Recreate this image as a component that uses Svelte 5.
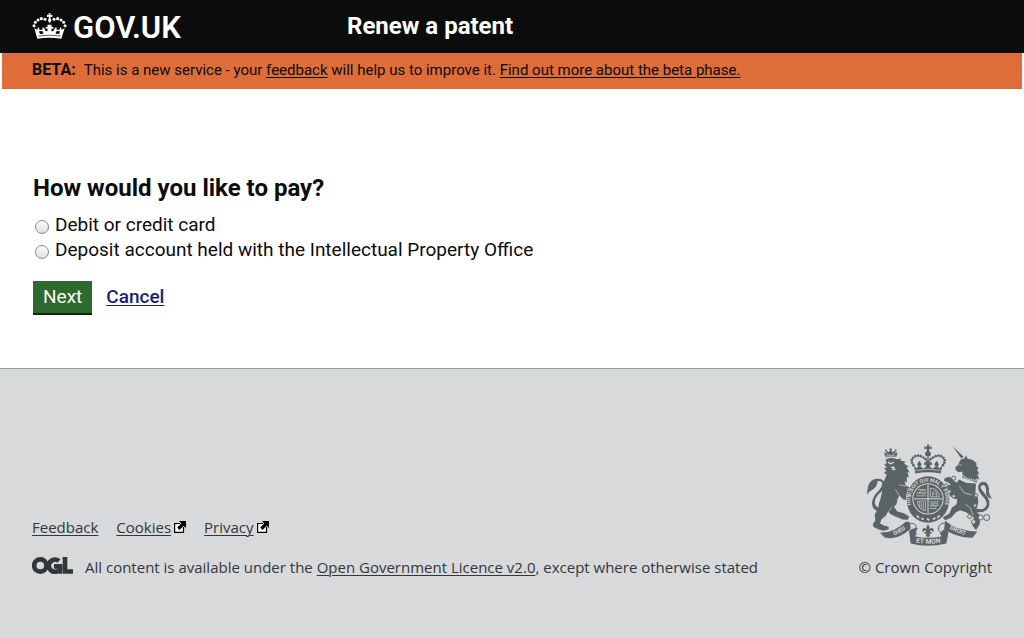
<script>
  let payment = $state('');

  const crownBalls = [
    [102, 76, 4.5], [106, 66, 4.5], [114, 59, 4.5], [124, 55, 4.8], [135, 57, 4.5],
    [162, 57, 4.5], [173, 55, 4.8], [183, 59, 4.5], [191, 66, 4.5], [195, 76, 4.5]
  ];
  const pearls = [
    [160, 87], [156, 80], [155, 72], [159, 65], [166, 60], [174, 58], [182, 60], [190, 64], [197, 69],
    [249, 87], [253, 80], [254, 72], [250, 65], [243, 60], [235, 58], [227, 60], [219, 64], [212, 69]
  ];
</script>

<header class="masthead">
  <a class="logo" href="#home">
    <svg class="crown" viewBox="96 38 105 78" aria-hidden="true">
      <g fill="#fff">
        {#each crownBalls as [x, y, r]}
          <circle cx={x} cy={y} {r} />
        {/each}
        <path d="M145 39h7l-1 5 6-1v7l-6-1 1 6q4 5 0 10l-3 3-3-3q-4-5 0-10l1-6-6 1v-7l6 1z" />
        <path d="M103 84L112 88 114 80Q119 83 118 88L124 88 123 93Q119 91 117 94L120 101 130 100 129 93Q123 94 123 90L128 87 127 81Q132 81 134 86L137 93 143 92 142 84 137 86V79L143 80 142 73H155L154 80 160 79V86L155 84 154 92 160 93 163 86Q165 81 170 81L169 87 174 90Q174 94 168 93L167 100 177 101 180 94Q178 91 174 93L173 88 179 88Q178 83 183 80L185 88 194 84 184 115Q148 110 112 115z" />
      </g>
      <path d="M115 107Q148 102 182 107" fill="none" stroke="#0b0c0c" stroke-width="2" />
    </svg>
    <span>GOV.UK</span>
  </a>
  <a class="service" href="#start">Renew a patent</a>
</header>

<div class="beta">
  <strong>BETA:</strong>
  <span>This is a new service - your <a href="#feedback">feedback</a> will help us to improve it. <a href="#beta">Find out more about the beta phase.</a></span>
</div>

<main>
  <form onsubmit={(e) => e.preventDefault()}>
    <fieldset>
      <legend>How would you like to pay?</legend>
      <label><input type="radio" name="payment" value="card" bind:group={payment} />Debit or credit card</label>
      <label><input type="radio" name="payment" value="deposit" bind:group={payment} />Deposit account held with the Intellectual Property Office</label>
    </fieldset>
    <div class="actions">
      <button type="submit">Next</button>
      <a href="#cancel">Cancel</a>
    </div>
  </form>
</main>

{#snippet external()}
  <svg class="external" viewBox="0 0 12 12" aria-hidden="true">
    <path d="M6 2.500H.6v8.900h8.900V6" fill="#fff" stroke="#000" stroke-width="1.200" />
    <path d="M5 0h7v7L9.700 4.800 5.500 9 3.200 6.600 7.300 2.400z" />
  </svg>
{/snippet}

<footer>
  <div class="meta">
    <nav aria-label="Support links">
      <span><a href="#feedback">Feedback</a></span>
      <span><a href="#cookies">Cookies</a>{@render external()}</span>
      <span><a href="#privacy">Privacy</a>{@render external()}</span>
    </nav>
    <div class="licence">
      <svg class="ogl" viewBox="0 0 123 51" role="img" aria-label="OGL">
        <g fill="none" stroke="#323739" stroke-width="14">
          <circle cx="25" cy="25.500" r="18.500" />
          <path d="M81 12A18.500 18.500 0 1 0 84 37V28H66" />
          <path d="M99 0V43.500H123" />
        </g>
        <path d="M78 23h13v27H81z" fill="#323739" />
      </svg>
      <p>All content is available under the <a href="#licence">Open Government Licence v2.0</a>, except where otherwise stated</p>
    </div>
  </div>
  <a class="copyright" href="#copyright">
    <svg class="crest" viewBox="21 24 375 308" aria-hidden="true">
      <defs>
        <path id="garter" d="M164 224A53 53 0 1 1 244 224" />
        <path id="ribbon" d="M152 317Q204 328 258 317" />
        <path id="left" d="M86 304Q122 294 152 266" />
        <path id="right" d="M256 268Q284 291 330 301" />
      </defs>
      <g fill="#5a6466">
        <!-- lion -->
        <path d="M76 64L72 48 78 51 80 44 86 48 92 41 98 48 104 44 107 51 113 48 109 64Q92 58 76 64z" />
        <circle cx="92" cy="40" r="3.500" />
        <circle cx="78" cy="43" r="3" />
        <circle cx="107" cy="43" r="3" />
        <path d="M77 70Q94 62 110 69L124 67 121 73 137 77 132 82 146 92 140 94 149 109 142 108 147 124 140 122 141 138 134 136 137 148Q152 153 156 166L158 186 148 192 130 190 118 178 112 190Q112 204 102 212L112 226 132 231 148 242 143 251 128 250 106 241 92 234 84 226 78 238 64 250 60 262 72 268 86 272 86 280 70 284 54 279 40 272 39 262 46 254 44 236 54 218Q56 200 61 190L66 168Q62 146 74 130L80 116 72 110 79 104 72 96 80 94 73 84 80 82z" />
        <path d="M60 226Q36 224 36 198Q40 178 56 164Q68 152 66 140Q62 132 52 136Q52 152 38 160Q28 164 21 176Q22 160 24 152Q30 130 50 128Q70 126 73 142Q73 156 62 168Q46 180 44 198Q46 214 60 214z" />
        <!-- unicorn -->
        <path d="M278 30L311 62 304 67z" />
        <path d="M302 70L314 66 318 58 323 68Q342 70 351 84L347 86 356 98 351 100 358 114 352 114 358 130 349 127 352 140 306 124 308 106 296 108 287 102 286 94 296 82z" />
        <path d="M297 130L318 140 348 142 346 172Q360 188 352 210L348 222 358 236 360 262 348 282 336 266 346 256 338 240 318 228 300 222 288 228 274 244 256 252 248 244 268 232 276 214 290 204 292 190 280 186 268 178 256 160 258 150 272 146 266 140 252 134 254 126 268 122 290 140z" />
        <path d="M350 218Q376 224 380 204Q380 192 366 178Q350 160 356 146Q364 132 379 140Q390 150 386 166Q390 180 396 188Q380 184 378 172Q380 156 374 148Q366 144 362 152Q362 160 376 174Q392 192 387 210Q378 234 346 226z" />
        <!-- royal crown -->
        <path d="M201 25H208L207 32 215 31V39L207 38 208 45Q214 49 213 55 211 61 204 62 197 61 195 55 194 49 200 45L201 38 193 39V31L201 32z" />
        <path d="M202 60H206V91H202zM162 88L170 96 175 90 171 84 178 74 185 84 181 90 190 98 198 92 197 85 192 87V78L198 79 197 73H211L210 79 216 78V87L211 85 210 92 218 98 227 90 223 84 230 74 237 84 233 90 238 96 247 88 242 112Q204 104 166 112z" />
        {#each pearls as [x, y]}
          <circle cx={x} cy={y} r="4" />
        {/each}
        <!-- ribbons -->
        <path d="M60 290Q104 290 138 256L150 258 152 278Q112 314 74 304z" />
        <path d="M256 254Q288 284 352 286L338 304Q294 308 252 278z" />
        <path d="M147 284Q160 274 174 276Q166 284 170 294L164 300Q204 310 246 300L240 294Q244 280 262 276L266 285 259 322Q204 336 152 322z" />
      </g>
      <path d="M152 262Q172 260 168 280L162 292M256 260Q232 262 236 282L246 294" fill="none" stroke="#5a6466" stroke-width="3" />
      <!-- garter and shield -->
      <ellipse cx="204" cy="190" rx="66" ry="72" fill="#d8d9db" />
      <ellipse cx="204" cy="190" rx="64" ry="70" fill="#5a6466" />
      <circle cx="204" cy="188" r="47" fill="#d8d9db" />
      <circle cx="204" cy="188" r="44" fill="#5a6466" />
      <g fill="none" stroke="#d8d9db" stroke-width="2">
        <path d="M204 146V230M162 188H246" stroke-width="3" />
        <path d="M174 161H199M170 170H199M169 179H199M178 158L183 164 189 160 197 166M175 174L181 167 188 175 197 170" />
        <path d="M209 197H238M209 207H238M209 217H230M213 201L219 204 226 200 234 204M212 212L219 208 225 213 232 208" />
        <path d="M211 156Q238 158 238 182H211zM218 180V168Q224 160 230 168V180M218 173H230" />
        <path d="M172 196L196 194V224Q174 220 172 196zM179 198V214M184 198V218M190 198V220" />
        <path d="M170 238L177 245M184 246L191 250M201 248L208 252M219 250L226 245M232 245L239 238" stroke-width="5" />
        <path d="M74 61Q92 53 111 61M80 52L86 56M98 56L104 52" />
        <path d="M166 103Q204 95 242 103" />
        <path d="M84 78L92 83 101 78M93 96L100 92 104 99 97 100" stroke-width="4" />
        <path d="M291 90L299 84 305 88" />
        <path d="M301 114L322 128 354 134" stroke-width="5" stroke-dasharray="4 3" />
        <path d="M302 124L322 136 350 140" stroke-width="2" />
        <path d="M298 150L312 170 336 176M106 160L118 178M118 146L138 150" />
        <path d="M316 204L330 214 340 238" />
        <path d="M142 158L158 168M140 176L156 180M96 212L86 226" />
      </g>
      <g fill="#d8d9db" stroke="#5a6466" stroke-width="3">
        <circle cx="281" cy="126" r="6" />
        <circle cx="258" cy="148" r="5" />
        <circle cx="268" cy="166" r="5" />
        <circle cx="281" cy="180" r="5" />
        <circle cx="348" cy="178" r="5" />
        <circle cx="345" cy="208" r="5" />
        <circle cx="329" cy="241" r="6" />
        <circle cx="341" cy="257" r="6.500" />
        <circle cx="362" cy="244" r="7.500" />
        <circle cx="380" cy="244" r="9" />
      </g>
      <path fill="#5a6466" d="M204 264Q213 276 207 286 210 273 218 276 225 281 217 288 217 281 212 283L209 288H215V293H208L211 299 204 304 197 299 200 293H193V288H199L196 283Q191 281 191 288 183 281 190 276 198 273 201 286 195 276 204 264z" />
      <g class="motto">
        <text font-size="15"><textPath href="#garter" startOffset="50%" text-anchor="middle">HONI SOIT QUI MAL Y PENSE</textPath></text>
        <text font-size="20"><textPath href="#ribbon" startOffset="50%" text-anchor="middle">ET MON</textPath></text>
        <text font-size="18"><textPath href="#left" startOffset="50%" text-anchor="middle">DIEU</textPath></text>
        <text font-size="18"><textPath href="#right" startOffset="50%" text-anchor="middle">DROIT</textPath></text>
      </g>
    </svg>
    <span>© Crown Copyright</span>
  </a>
</footer>

<style>
  :global(body) {
    margin: 0;
    background: #fff;
    color: #0b0c0c;
    font-family: Roboto, "Liberation Sans", sans-serif;
    font-size: 16px;
    line-height: 20px;
  }
  :global(#app) {
    display: flex;
    flex-direction: column;
    min-height: 100vh;
  }
  a {
    color: inherit;
    text-underline-offset: 2px;
    text-decoration-thickness: 1px;
  }
  .masthead {
    display: grid;
    grid-template-columns: 315px 1fr;
    align-items: center;
    padding: 0 32px 1px;
    min-height: 52px;
    background: #0b0c0c;
    color: #fff;
  }
  .masthead a {
    text-decoration: none;
  }
  .logo {
    display: flex;
    align-items: center;
    gap: 6px;
    font-size: 31px;
    font-weight: 600;
    line-height: 34px;
  }
  .logo span {
    padding-top: 3px;
  }
  .crown {
    width: 35px;
    height: 26px;
  }
  .service {
    font-size: 24px;
    font-weight: 700;
    line-height: 30px;
  }
  .beta {
    display: flex;
    gap: 8px;
    margin: 0 2px;
    padding: 7px 30px 9px;
    background: #df6d39;
  }
  .beta span {
    font-size: 15px;
  }
  main {
    padding: 84px 33px 53px;
  }
  fieldset {
    display: flex;
    flex-direction: column;
    margin: 0;
    padding: 0;
    border: 0;
    font-size: 19px;
    line-height: 25px;
  }
  legend {
    padding: 0 0 9px;
    font-size: 24px;
    font-weight: 700;
    line-height: 30px;
  }
  label {
    display: flex;
    align-items: center;
    gap: 6px;
  }
  input {
    appearance: none;
    box-sizing: border-box;
    width: 14px;
    height: 14px;
    margin: 4px 0 0 2px;
    border: 1px solid #8b8b8b;
    border-radius: 50%;
    background: linear-gradient(#fdfdfd, #dedede);
  }
  input:checked {
    background: radial-gradient(#222 0 3px, #eee 4px);
  }
  .actions {
    display: flex;
    align-items: baseline;
    gap: 14px;
    margin-top: 19px;
    font-size: 19px;
  }
  button {
    padding: 4px 10px;
    border: 0;
    border-bottom: 2px solid #0f2410;
    background: #2c6a2e;
    color: #fff;
    font: inherit;
    line-height: 24px;
  }
  .actions a {
    color: #1a1f71;
    font-weight: 500;
  }
  footer {
    display: flex;
    flex: 1;
    align-items: flex-start;
    justify-content: space-between;
    padding: 75px 32px 60px;
    border-top: 1px solid #949d9f;
    background: #d8d9db;
    color: #323739;
    font-family: "Open Sans", "Noto Sans", sans-serif;
    font-size: 15px;
  }
  .meta {
    padding-top: 73px;
  }
  nav {
    display: flex;
    gap: 18px;
  }
  .external {
    width: 12px;
    height: 12px;
    margin-left: 3px;
  }
  .licence {
    display: flex;
    gap: 12px;
    margin-top: 20px;
  }
  .ogl {
    width: 41px;
    height: 17px;
  }
  p {
    margin: 0;
  }
  .copyright {
    display: flex;
    flex-direction: column;
    align-items: flex-end;
    gap: 10px;
    text-decoration: none;
  }
  .crest {
    width: 125px;
    height: 103px;
  }
  .motto {
    fill: #d8d9db;
    font-family: Roboto, sans-serif;
    font-weight: 700;
  }
</style>
